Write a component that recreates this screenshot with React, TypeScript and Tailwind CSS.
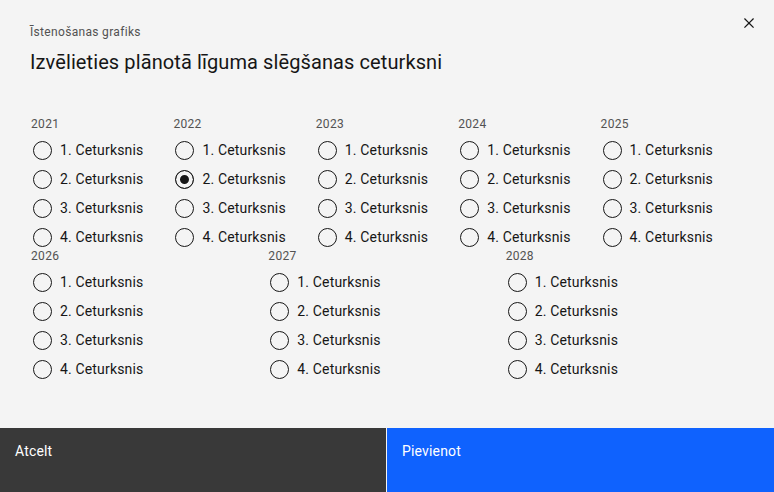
import React, { useState } from 'react';

const topYears = ['2021', '2022', '2023', '2024', '2025'];
const bottomYears = ['2026', '2027', '2028'];
const quarters = ['1. Ceturksnis', '2. Ceturksnis', '3. Ceturksnis', '4. Ceturksnis'];

function YearGroup({ year, selected, onSelect }: { year: string; selected: string; onSelect: (v: string) => void }) {
  return (
    <div className="flex flex-col">
      <div className="h-4 text-[12px] leading-4 tracking-[0.32px] text-[#525252]">{year}</div>
      <div className="mt-[6px] flex flex-col gap-[5px]">
        {quarters.map((q, i) => {
          const id = `${year}-${i + 1}`;
          const checked = selected === id;
          return (
            <label key={id} className="flex h-6 cursor-pointer items-center gap-2 pl-[2px]" onClick={() => onSelect(id)}>
              <span
                className={`h-[19px] w-[19px] shrink-0 rounded-full border border-[#161616] ${
                  checked ? 'bg-[#161616] shadow-[inset_0_0_0_4px_#f4f4f4]' : 'bg-transparent'
                }`}
              />
              <span className="text-[14px] leading-[18px] tracking-[0.16px] text-[#161616]">{q}</span>
            </label>
          );
        })}
      </div>
    </div>
  );
}

export default function App() {
  const [selected, setSelected] = useState('2022-2');

  return (
    <div className="flex h-[492px] w-[774px] flex-col bg-[#f4f4f4] font-['Roboto',sans-serif] text-[#161616]">
      {/* Header */}
      <div className="flex items-start justify-between pl-[30px] pr-px pt-6">
        <div>
          <p className="text-[12px] leading-4 tracking-[0.32px] text-[#525252]">Īstenošanas grafiks</p>
          <h2 className="mt-2 text-[20px] leading-7 tracking-[0.1px] text-[#161616]">Izvēlieties plānotā līguma slēgšanas ceturksni</h2>
        </div>
        <button className="-mt-[25px] flex h-12 w-12 items-center justify-center">
          <svg width="20" height="20" viewBox="0 0 32 32" fill="#161616">
            <path d="M24 9.4 22.6 8 16 14.6 9.4 8 8 9.4l6.6 6.6L8 22.6 9.4 24l6.6-6.6 6.6 6.6 1.4-1.4-6.6-6.6z" />
          </svg>
        </button>
      </div>

      {/* Body */}
      <div className="mt-10 w-[743px] pl-[31px]">
        <div className="grid grid-cols-5">
          {topYears.map((y) => (
            <YearGroup key={y} year={y} selected={selected} onSelect={setSelected} />
          ))}
        </div>
        <div className="-mt-[1px] grid grid-cols-3">
          {bottomYears.map((y) => (
            <YearGroup key={y} year={y} selected={selected} onSelect={setSelected} />
          ))}
        </div>
      </div>

      {/* Footer */}
      <div className="mt-auto flex h-16 gap-px">
        <button className="flex h-16 w-[386px] items-start bg-[#393939] px-[15px] pt-[14px] text-left text-[14px] leading-[18px] tracking-[0.16px] text-white">
          Atcelt
        </button>
        <button className="flex h-16 flex-1 items-start bg-[#0f62fe] px-[15px] pt-[14px] text-left text-[14px] leading-[18px] tracking-[0.16px] text-white">
          Pievienot
        </button>
      </div>
    </div>
  );
}
